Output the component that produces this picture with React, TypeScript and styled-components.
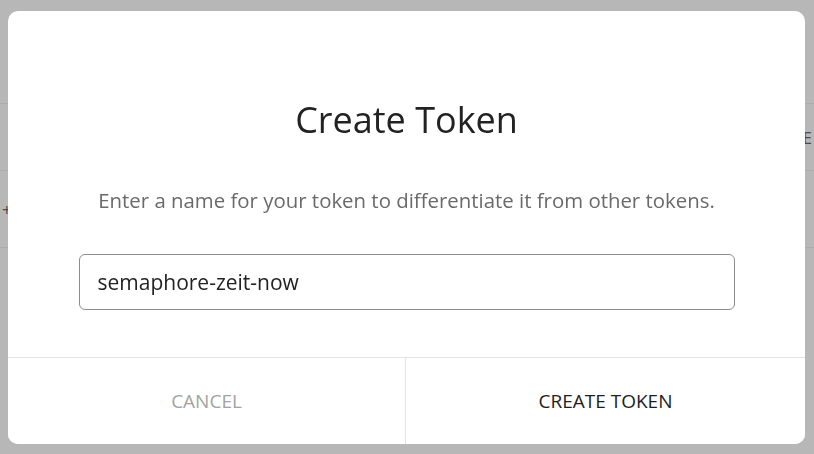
import React from "react";
import styled, { createGlobalStyle } from "styled-components";

const Global = createGlobalStyle`
  html, body { margin: 0; padding: 0; }
  body {
    width: 814px;
    height: 454px;
    overflow: hidden;
    background: #b6b6b6;
    font-family: "Open Sans", "Noto Sans", sans-serif;
  }
`;

const Page = styled.div`
  width: 814px;
  height: 454px;
  display: flex;
  flex-direction: column;
  background: #b7b7b7;
`;

const PageTop = styled.div`
  height: 103px;
  border-bottom: 1px solid #acacac;
`;

const PageRow = styled.div<{ $h: number }>`
  height: ${(p) => p.$h}px;
  border-bottom: 1px solid #acacac;
  display: flex;
  align-items: center;
  justify-content: space-between;
  color: #444;
  font-size: 17px;
  padding: 0 2px;
`;

const EdgeGlyph = styled.span`
  color: #4a4a4a;
`;

const Overlay = styled.div`
  position: fixed;
  inset: 0;
  display: flex;
  align-items: flex-start;
  justify-content: center;
  padding-top: 11px;
`;

const Modal = styled.div`
  width: 797px;
  height: 433px;
  margin-left: -1px;
  background: #fff;
  border-radius: 10px;
  display: flex;
  flex-direction: column;
  overflow: hidden;
`;

const Body = styled.div`
  flex: 1;
  display: flex;
  flex-direction: column;
  align-items: center;
  padding-top: 87px;
`;

const Title = styled.h1`
  margin: 0;
  font-size: 36px;
  font-weight: 400;
  color: #222;
  line-height: 44px;
`;

const Subtitle = styled.p`
  margin: 44px 0 0;
  font-size: 20.4px;
  color: #6a6a6a;
  line-height: 28px;
`;

const Input = styled.input`
  margin-top: 40px;
  width: 656px;
  height: 56px;
  box-sizing: border-box;
  border: 1px solid #8c8c8c;
  border-radius: 6px;
  padding: 0 18px;
  font-family: inherit;
  font-size: 21px;
  color: #222;
  outline: none;
  background: #fff;
`;

const Footer = styled.div`
  height: 86px;
  border-top: 1px solid #e4e4e4;
  display: grid;
  grid-template-columns: 397px 1fr;
`;

const FooterButton = styled.button<{ $primary?: boolean }>`
  border: none;
  background: #fff;
  font-family: inherit;
  font-size: 19px;
  text-transform: uppercase;
  color: ${(p) => (p.$primary ? "#1e1e1e" : "#a3a3a3")};
  border-left: ${(p) => (p.$primary ? "1px solid #e4e4e4" : "none")};
  cursor: pointer;
  padding: 0;
`;

export default function App() {
  return (
    <>
      <Global />
      <Page>
        <PageTop />
        <PageRow $h={66}>
          <span />
          <EdgeGlyph>E</EdgeGlyph>
        </PageRow>
        <PageRow $h={76}>
          <EdgeGlyph>+</EdgeGlyph>
          <span />
        </PageRow>
      </Page>
      <Overlay>
        <Modal>
          <Body>
            <Title>Create Token</Title>
            <Subtitle>Enter a name for your token to differentiate it from other tokens.</Subtitle>
            <Input defaultValue="semaphore-zeit-now" />
          </Body>
          <Footer>
            <FooterButton>Cancel</FooterButton>
            <FooterButton $primary>Create Token</FooterButton>
          </Footer>
        </Modal>
      </Overlay>
    </>
  );
}
